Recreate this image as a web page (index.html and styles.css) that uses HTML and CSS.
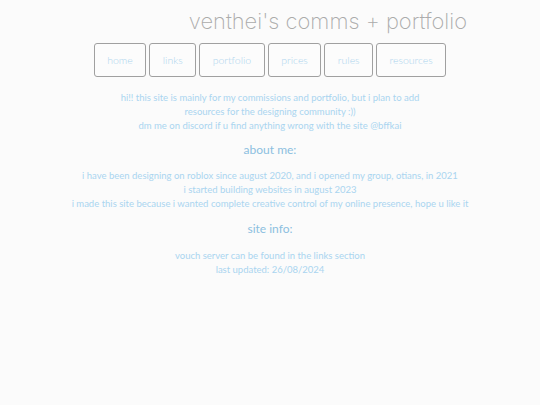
FILE: index.html
```html
<!DOCTYPE html>
<html>
<head>
<meta charset="utf-8">
<link rel="stylesheet" href="styles.css">
</head>
<body>
<header class="top">
  <h1 class="title">venthei's comms + portfolio</h1>
</header>
<nav class="nav">
  <a class="btn" href="#">home</a>
  <a class="btn" href="#">links</a>
  <a class="btn" href="#">portfolio</a>
  <a class="btn" href="#">prices</a>
  <a class="btn" href="#">rules</a>
  <a class="btn" href="#">resources</a>
</nav>
<main class="content">
  <p class="text">hi!! this site is mainly for my commissions and portfolio, but i plan to add<br>resources for the designing community :))<br>dm me on discord if u find anything wrong with the site @bffkai</p>
  <h2 class="heading">about me:</h2>
  <p class="text">i have been designing on roblox since august 2020, and i opened my group, otians, in 2021<br>i started building websites in august 2023<br>i made this site because i wanted complete creative control of my online presence, hope u like it</p>
  <h2 class="heading heading-last">site info:</h2>
  <p class="text">vouch server can be found in the links section<br>last updated: 26/08/2024</p>
</main>
</body>
</html>
```

FILE: styles.css
```css
html, body {
  margin: 0;
  padding: 0;
  background: #fbfbfb;
}
body {
  font-family: "Lato", "Liberation Sans", sans-serif;
  width: 540px;
  height: 405px;
  overflow: hidden;
}
.top {
  display: flex;
  justify-content: flex-end;
  padding: 4px 73px 0 0;
}
.title {
  margin: 0;
  font-family: "Inter", "Lato", sans-serif;
  font-weight: 200;
  font-size: 21.9px;
  line-height: 34px;
  color: #ababab;
}
.nav {
  display: flex;
  justify-content: center;
  gap: 3px;
  margin-top: 5px;
}
.btn {
  display: flex;
  align-items: center;
  justify-content: center;
  height: 34px;
  box-sizing: border-box;
  padding: 0 12.5px;
  border: 1.5px solid #a0a0a0;
  border-radius: 3px;
  background: #fcfcfc;
  color: #acd4ee;
  font-size: 10.5px;
  font-weight: 300;
  text-decoration: none;
}
.content {
  text-align: center;
  padding-top: 14px;
}
.text {
  margin: 0;
  font-size: 9.5px;
  font-weight: 400;
  line-height: 14px;
  color: #aad5f0;
}
.heading {
  margin: 9px 0 11px;
  font-size: 12px;
  font-weight: 400;
  line-height: 16px;
  color: #8cbfe0;
}
.heading-last {
  margin: 10px 0 12px;
}
```
